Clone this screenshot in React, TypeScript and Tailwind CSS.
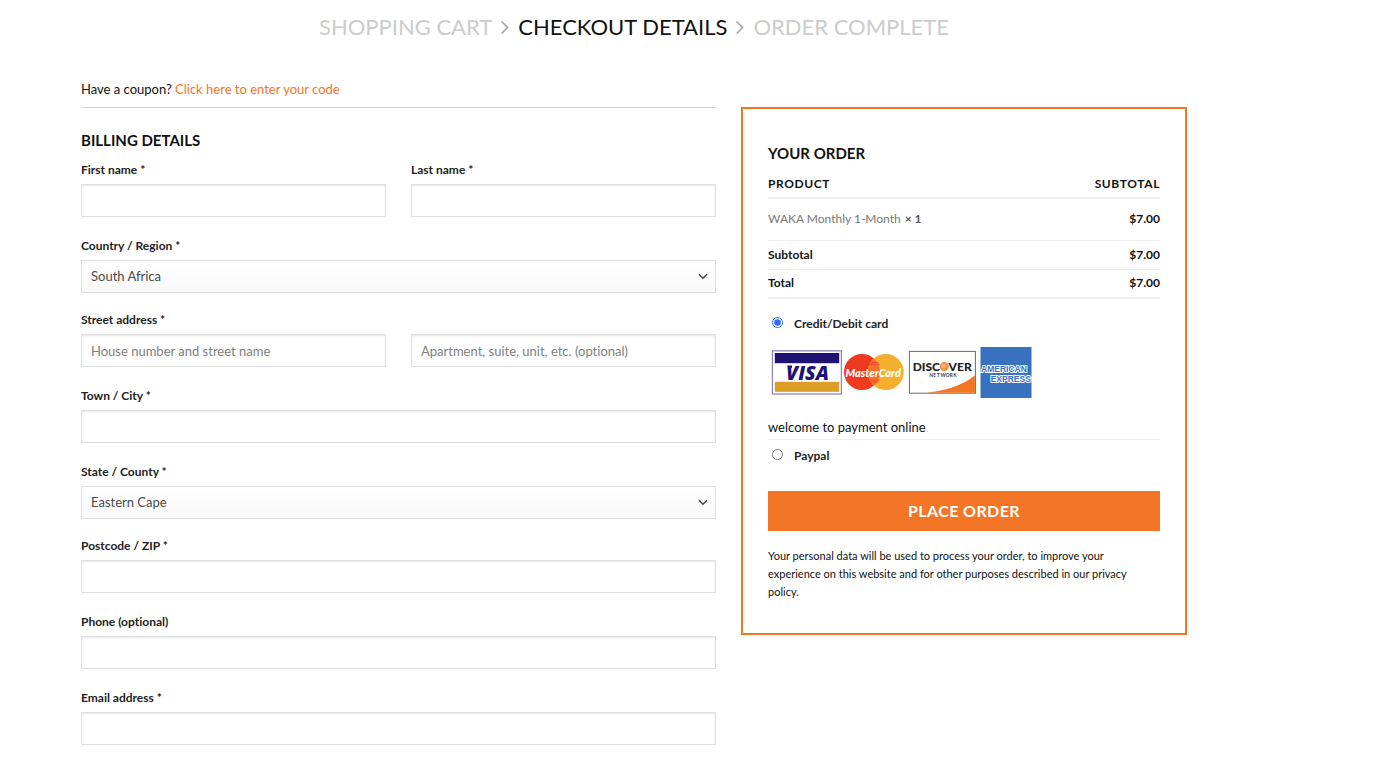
import { useState, type ReactNode } from "react";

const control =
  "block h-[33px] w-full rounded-none border border-[#e0e0e0] px-[9px] text-[13px] outline-none focus:border-[#bbbbbb]";

function Label({ htmlFor, children }: { htmlFor: string; children: ReactNode }) {
  return (
    <label htmlFor={htmlFor} className="mb-[3px] block text-xs leading-[22px] font-bold text-[#222222]">
      {children}
    </label>
  );
}

function TextInput({ id, type = "text", placeholder, label }: { id: string; type?: string; placeholder?: string; label?: string }) {
  return (
    <input
      id={id}
      name={id}
      type={type}
      placeholder={placeholder}
      aria-label={label}
      className={`${control} bg-white text-[#333333] shadow-[inset_0_1px_2px_rgba(0,0,0,0.1)] placeholder:text-[#808080]`}
    />
  );
}

function TextField({ id, label, type }: { id: string; label: string; type?: string }) {
  return (
    <div className="mb-[18px]">
      <Label htmlFor={id}>{label}</Label>
      <TextInput id={id} type={type} />
    </div>
  );
}

function SelectField({ id, label, options }: { id: string; label: string; options: string[] }) {
  return (
    <div className="mb-4">
      <Label htmlFor={id}>{label}</Label>
      <div className="relative">
        <select
          id={id}
          name={id}
          className={`${control} appearance-none bg-linear-to-b from-white to-[#f9f9f9] text-[#4a4a4a]`}
        >
          {options.map((o) => (
            <option key={o}>{o}</option>
          ))}
        </select>
        <svg
          className="pointer-events-none absolute top-[10px] right-[7px] size-3"
          viewBox="0 0 12 12"
          fill="none"
          stroke="#444444"
          strokeWidth="1.4"
          aria-hidden="true"
        >
          <path d="M2.3 4.6 6 8.2 9.7 4.6" strokeLinecap="round" />
        </svg>
      </div>
    </div>
  );
}

function StepArrow() {
  return (
    <svg className="mx-[9px] h-4 w-2" viewBox="0 0 8 16" fill="none" stroke="#a8a8a8" strokeWidth="1.8" aria-hidden="true">
      <path d="M1.2 3 6.5 8.5 1.2 14" strokeLinecap="round" />
    </svg>
  );
}

function CardLogos() {
  return (
    <svg className="block h-[60px] w-[270px]" viewBox="0 0 270 60" role="img" aria-label="Visa, MasterCard, Discover, American Express">
      <rect x="4.4" y="8.8" width="69" height="43.2" fill="#ffffff" stroke="#8d87bd" strokeWidth="1.3" />
      <rect x="6.8" y="11" width="64.4" height="10.2" fill="#1e1372" />
      <rect x="6.8" y="39.8" width="64.4" height="10" fill="#dc9c25" />
      <text x="39.5" y="37.8" textAnchor="middle" fontFamily="Open Sans, sans-serif" fontSize="19.5" fontWeight="800" fontStyle="italic" fill="#1e1372">VISA</text>
      <path d="M18 23.6H24V26Q21.500 24.200 18 23.600Z" fill="#1e1372" />

      <circle cx="94" cy="30" r="18" fill="#ee3a20" />
      <circle cx="117.7" cy="30" r="18" fill="#f6ae2f" />
      <path d="M105.850 16.4a18 18 0 0 1 0 27.2a18 18 0 0 1 0-27.2z" fill="#f0722a" />
      <path d="M101.5 20.5h9M100.5 22.5h11M100.5 38h11M101.5 40h9" stroke="#e8452a" strokeWidth="0.8" />
      <text x="105.2" y="34.5" textAnchor="middle" fontFamily="Lato, sans-serif" fontSize="11" fontWeight="900" fontStyle="italic" fill="#ffffff">MasterCard</text>

      <rect x="141.4" y="9.4" width="66" height="41.8" fill="#ffffff" stroke="#6b6b6b" strokeWidth="1" />
      <path d="M158.5 50.7Q188 48 206.9 33.5V50.7Z" fill="#f37623" />
      <circle cx="176.3" cy="24.6" r="4.5" fill="#f58a3c" />
      <circle cx="175.8" cy="24.2" r="2.4" fill="#fbb27c" />
      <text x="172" y="29" textAnchor="end" fontFamily="Lato, sans-serif" fontSize="12" fontWeight="900" fill="#222222">DISC</text>
      <text x="180.6" y="29" fontFamily="Lato, sans-serif" fontSize="12" fontWeight="900" fill="#222222">VER</text>
      <text x="161.2 165.2 168.8 172.4 177.4 181.4 185.2" y="35.3" fontFamily="Lato, sans-serif" fontSize="5" fontWeight="700" fill="#444444">NETWORK</text>

      <rect x="212.5" y="5" width="51" height="51" fill="#3871bd" />
      <text x="213" y="29.5" fontFamily="Liberation Sans, sans-serif" fontSize="8.5" fontWeight="700" fill="#3871bd" stroke="#ffffff" strokeWidth="1.8" paintOrder="stroke">AMERICAN</text>
      <text x="222.7" y="39.5" fontFamily="Liberation Sans, sans-serif" fontSize="8.5" fontWeight="700" fill="#3871bd" stroke="#ffffff" strokeWidth="1.8" paintOrder="stroke">EXPRESS</text>
    </svg>
  );
}

function PaymentOption({ id, label, checked, onSelect }: { id: string; label: string; checked: boolean; onSelect: () => void }) {
  return (
    <div className="flex h-[22px] items-center">
      <input id={id} type="radio" name="payment" checked={checked} onChange={onSelect} className="mr-[5px] mb-[3px] ml-1 size-[11px] accent-[#2f6bff]" />
      <label htmlFor={id} className="pl-[6px] text-xs leading-[22px] font-bold text-[#222222]">
        {label}
      </label>
    </div>
  );
}

export default function App() {
  const [payment, setPayment] = useState("card");

  return (
    <main className="bg-white pr-[213px] pl-[81px] font-['Lato',sans-serif] text-[#111111] [font-variant-ligatures:none]">
      <nav aria-label="Checkout steps" className="flex h-[54px] items-center justify-center text-[22px] leading-8 uppercase">
        <a href="#cart" className="text-[#cccccc]">Shopping Cart</a>
        <StepArrow />
        <a href="#checkout" aria-current="step" className="text-[#111111]">Checkout details</a>
        <StepArrow />
        <span className="text-[#cccccc]">Order Complete</span>
      </nav>

      <p className="mt-6 h-[29px] text-[13px] leading-[22px]">
        Have a coupon?{" "}
        <a href="#coupon" className="text-[#f37626]">Click here to enter your code</a>
      </p>

      <form className="grid grid-cols-[minmax(0,635fr)_minmax(0,446fr)] items-start gap-[25px]" onSubmit={(e) => e.preventDefault()}>
        <section className="border-t border-[#d4d4d4] pt-5">
          <h3 className="mb-[7px] text-[15px] leading-6 font-bold text-[#111111] uppercase">Billing details</h3>
          <div className="grid grid-cols-2 gap-[25px]">
            <TextField id="first-name" label="First name *" />
            <TextField id="last-name" label="Last name *" />
          </div>
          <SelectField id="country" label="Country / Region *" options={["South Africa"]} />
          <div className="mb-[18px]">
            <Label htmlFor="street">Street address *</Label>
            <div className="grid grid-cols-2 gap-[25px]">
              <TextInput id="street" placeholder="House number and street name" />
              <TextInput id="street-2" label="Apartment, suite, unit, etc." placeholder="Apartment, suite, unit, etc. (optional)" />
            </div>
          </div>
          <TextField id="city" label="Town / City *" />
          <SelectField id="state" label="State / County *" options={["Eastern Cape"]} />
          <TextField id="postcode" label="Postcode / ZIP *" />
          <TextField id="phone" label="Phone (optional)" type="tel" />
          <TextField id="email" label="Email address *" type="email" />
        </section>

        <section className="border-2 border-[#f37626] px-[25px] pt-8 pb-8">
          <h3 className="text-[15px] leading-6 font-bold text-[#111111] uppercase">Your order</h3>
          <table className="w-full border-collapse text-xs leading-5">
            <thead>
              <tr className="h-[33px] border-b-2 border-[#ececec] uppercase">
                <th scope="col" className="pt-[6px] text-left font-bold tracking-wider">Product</th>
                <th scope="col" className="pt-[6px] text-right font-bold tracking-wider">Subtotal</th>
              </tr>
            </thead>
            <tbody>
              <tr className="h-[42px] border-b border-[#ececec]">
                <td className="text-[#777777]">
                  WAKA Monthly 1-Month<strong className="ml-1 text-[#555555]">× 1</strong>
                </td>
                <td className="text-right font-bold">$7.00</td>
              </tr>
              <tr className="h-[29px] border-b border-[#ececec]">
                <th scope="row" className="text-left font-bold">Subtotal</th>
                <td className="text-right font-bold">$7.00</td>
              </tr>
              <tr className="h-[29px] border-b-2 border-[#ececec]">
                <th scope="row" className="text-left font-bold">Total</th>
                <td className="text-right font-bold">$7.00</td>
              </tr>
            </tbody>
          </table>

          <div className="pt-[14px]">
            <PaymentOption id="pay-card" label="Credit/Debit card" checked={payment === "card"} onSelect={() => setPayment("card")} />
            <div className="pt-[7px]">
              <CardLogos />
            </div>
            <p className="border-b border-[#ececec] pt-[14px] pb-[1px] text-[13px] leading-[22px]">welcome to payment online</p>
            <div className="pt-[5px]">
              <PaymentOption id="pay-paypal" label="Paypal" checked={payment === "paypal"} onSelect={() => setPayment("paypal")} />
            </div>
          </div>

          <button type="submit" className="mt-6 block h-10 w-full bg-[#f37626] text-base leading-10 font-bold tracking-wide text-white uppercase">
            Place order
          </button>
          <p className="mt-4 pr-4 text-[11px] leading-[18px]">
            Your personal data will be used to process your order, to improve your experience on this website and for other purposes described in our privacy policy.
          </p>
        </section>
      </form>
    </main>
  );
}
